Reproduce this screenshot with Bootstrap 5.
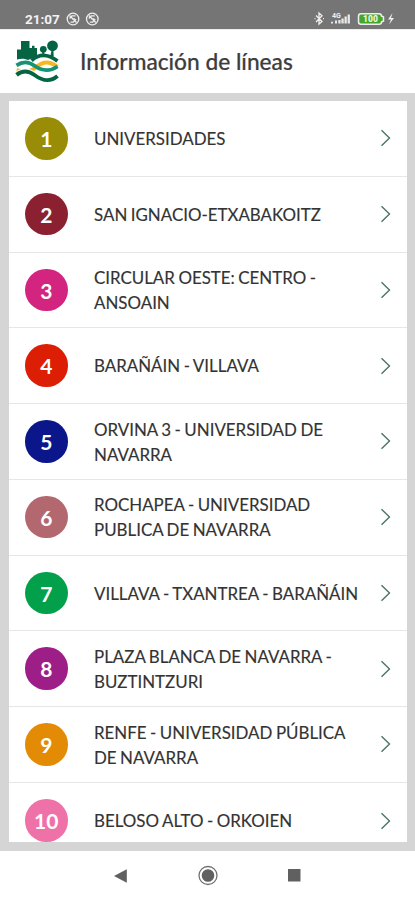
<!DOCTYPE html>
<html lang="es">
<head>
<meta charset="utf-8">
<meta name="viewport" content="width=device-width, initial-scale=1">
<title>Información de líneas</title>
<link href="https://cdn.jsdelivr.net/npm/bootstrap@5.3.0/dist/css/bootstrap.min.css" rel="stylesheet">
<style>
body{font-family:Lato,sans-serif;color:#333;background:#d5d5d5}
.screen{height:900px}
.status-bar{height:29px;background:#757575;color:#f2f2f2;padding:8px 18px 0 25px}
.clock{font:700 13.5px/20px Roboto,sans-serif;width:35px;margin-right:6px}
.app-bar{height:64px;padding:0 15px;border-top:1px solid #ececec}
.app-title{font-size:22.7px;font-weight:500;line-height:28px;color:#3d3d3d;margin-left:21px;-webkit-text-stroke:.2px #3d3d3d}
.lines-area{padding:8px 8.5px 9px 9px;background:#d5d5d5;min-height:0}
.line-row{height:75.75px;padding:0 15.5px 0 16px;border:0;border-bottom:1.5px solid #e6e6e6;border-radius:0;color:#333}
.line-no{width:42.5px;height:42.5px;font-size:21px;font-weight:700;line-height:1;padding-top:.5px}
.line-name{font-size:16.9px;line-height:25px;word-spacing:-.8px;margin-left:26.5px;padding-top:.5px;-webkit-text-stroke:.15px #333;white-space:pre}
.nav-keys{height:49px;padding:0 114px}
</style>
</head>
<body>
<div class="screen d-flex flex-column overflow-hidden">
  <div class="status-bar d-flex align-items-center flex-shrink-0">
    <span class="clock">21:07</span>
    <svg width="34" height="14" viewBox="0 0 34 14" fill="none" stroke="#eee" stroke-width="1.3"><g id="b"><circle cx="7" cy="7" r="5.8"/><path d="M3.500 6.500 6 3.800h3.500M10 7.200l-2.600 3H4.500M3.500 3.500l7 7M6 6.800l3 .2" /></g><use href="#b" x="19.3"/></svg>
    <svg class="ms-auto" width="84" height="16" viewBox="0 0 84 16"><path d="m3 4.500 6 6L6 13V2l3 2.700L3 11M1.500 7.700h1M10 7.700h1" fill="none" stroke="#eee" stroke-width="1.300"/>
      <path fill="#e9e9e9" d="M18 12.500v-1.700h2v1.700zM22 12.500V9.500h2v3zM25.300 12.500V9h2.300v3.500zM28.400 12.500V7.500h2.300v5zM31.500 12.500V5.500h2.300v7zM34.600 12.500V3.400h2.300v9.100z"/>
      <text x="19" y="6.500" font-family="Roboto,sans-serif" font-size="7" font-weight="700" fill="#eee">4G</text>
      <path d="M48 2.700h18q2.500 0 2.500 2.300l2 1v4l-2 1q0 2.300-2.500 2.300H48q-2.500 0-2.500-2.500V5.200q0-2.500 2.500-2.500z" fill="#46a52c" stroke="#eee" stroke-width="1.500"/>
      <text x="57.500" y="11" text-anchor="middle" font-family="Roboto,sans-serif" font-size="8.500" font-weight="900" fill="#e4f8dc">100</text>
      <path d="m79.500 2-4.500 6.500h3l-2 5 5-6.500h-3z" fill="#eee"/></svg>
  </div>
  <header class="app-bar d-flex align-items-center flex-shrink-0 bg-white">
    <svg width="44" height="44" viewBox="0 0 44 44">
      <g fill="#056443"><path d="M2 18.500V9.500h4V1h8.500v7H17V5.800h2.500V8H22v9c-4 .3-6.500 2-9 3-4-1.500-7-1.500-11-.5z"/><circle cx="28.300" cy="9.300" r="3.400"/><circle cx="37.500" cy="5.800" r="5.400"/><path d="M27.300 11h2v5h-2zM36.600 10h1.800l.3 6.500h-3.400z"/></g>
      <g fill="none">
        <path d="M16.500 20.500c7-6.500 16-7 26 .5" stroke="#056443" stroke-width="3.800"/>
        <path d="M1.500 30.200c6 1.500 11 2.800 16.500-.8 5-3.400 7-6.900 13.500-6.900 5 0 7 1.500 11 4.300" stroke="#f8b71d" stroke-width="4"/>
        <path d="M1.500 25.400C8 21 14 21.600 19.500 25.800c6 4.500 14.500 6.500 23 .6" stroke="#159374" stroke-width="3.700"/>
        <path d="M1.500 34.800c6.500-5 12-4.200 18 .2 7 5.200 14.500 8.200 23 1" stroke="#fff" stroke-width="6"/>
        <path d="M1.500 34.800c6.500-5 12-4.200 18 .2 7 5.200 14.500 8.200 23 1" stroke="#056443" stroke-width="4"/>
      </g>
    </svg>
    <h1 class="app-title mb-0">Información de líneas</h1>
  </header>
  <main class="lines-area flex-grow-1 d-flex flex-column">
    <div class="list-group list-group-flush bg-white overflow-hidden flex-grow-1 rounded-0" id="lines"></div>
  </main>
  <nav class="nav-keys bg-white d-flex align-items-center justify-content-between flex-shrink-0">
    <svg width="14" height="14" viewBox="0 0 14 14"><path d="M0 7 12.800.3v13.400z" fill="#606060"/></svg>
    <svg width="21" height="21" viewBox="0 0 21 21"><circle cx="10" cy="10.500" r="9" fill="none" stroke="#707070" stroke-width="1.300"/><circle cx="10" cy="10.500" r="6.300" fill="#606060"/></svg>
    <svg width="13" height="13" viewBox="0 0 13 13"><path d="M0 0h12.500v12.500H0z" fill="#606060"/></svg>
  </nav>
</div>
<script src="https://cdn.jsdelivr.net/npm/bootstrap@5.3.0/dist/js/bootstrap.bundle.min.js"></script>
<script>
const lines=[
["#998d08","UNIVERSIDADES"],["#8b2130","SAN IGNACIO-ETXABAKOITZ"],["#d3247f","CIRCULAR OESTE: CENTRO -\nANSOAIN"],
["#dc1e05","BARAÑÁIN - VILLAVA"],["#0a168a","ORVINA 3 - UNIVERSIDAD DE\nNAVARRA"],["#b3686f","ROCHAPEA - UNIVERSIDAD\nPUBLICA DE NAVARRA"],
["#03a04b","VILLAVA - TXANTREA - BARAÑÁIN"],["#9e1e87","PLAZA BLANCA DE NAVARRA -\nBUZTINTZURI"],["#e38b05","RENFE - UNIVERSIDAD PÚBLICA\nDE NAVARRA"],["#ee71a8","BELOSO ALTO - ORKOIEN"]];
document.getElementById("lines").innerHTML=lines.map(([c,n],i)=>`<a class="list-group-item line-row d-flex align-items-center flex-shrink-0">
<span class="line-no rounded-circle text-white d-flex align-items-center justify-content-center flex-shrink-0" style="background:${c}">${i+1}</span>
<span class="line-name">${n}</span>
<svg class="ms-auto flex-shrink-0" width="11" height="18" viewBox="0 0 11 18"><path d="m1.500 1.200 8 7.800-8 7.800" fill="none" stroke="#48756a" stroke-width="1.400"/></svg></a>`).join("");
</script>
</body>
</html>
